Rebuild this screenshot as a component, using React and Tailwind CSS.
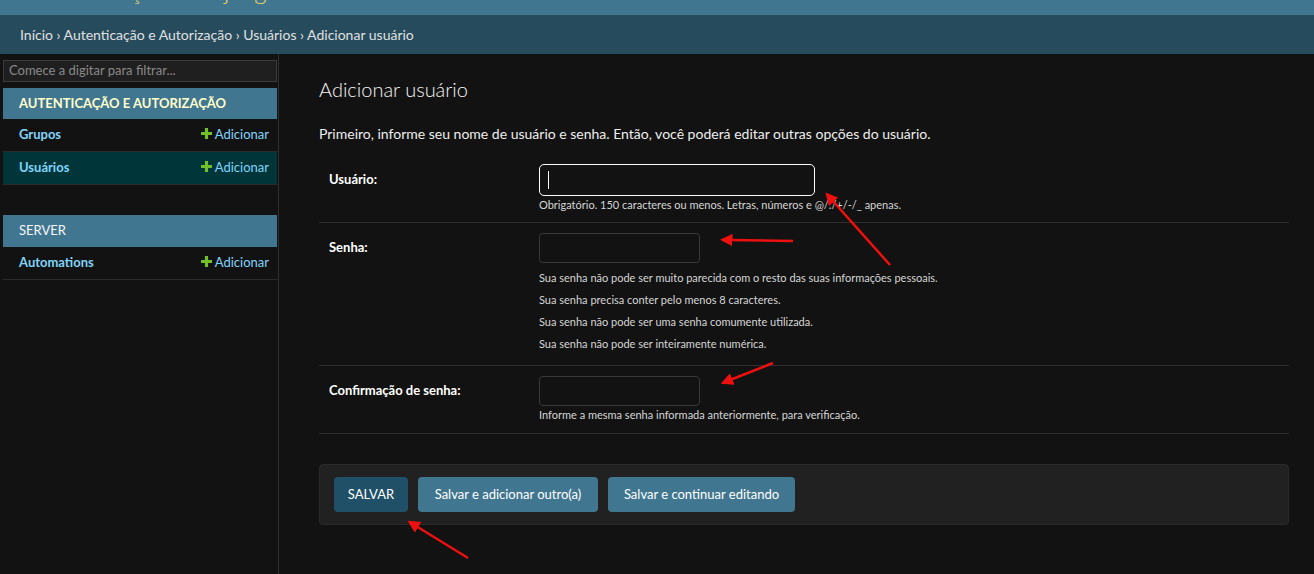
import React from 'react'

const font = { fontFamily: 'Lato, "Noto Sans", sans-serif' }

function PlusIcon() {
  return (
    <svg width="11" height="11" viewBox="0 0 14 14" className="mr-[3px] -mt-[3px]">
      <path d="M5 0h4v5h5v4H9v5H5V9H0V5h5z" fill="#70bf2b" />
    </svg>
  )
}

function ModuleRow({ name, selected }) {
  return (
    <div
      className={
        'h-[33px] flex items-center justify-between pl-4 pr-2 border-b border-[#2b2b2b] ' +
        (selected ? 'bg-[#00363a]' : '')
      }
    >
      <span className="text-[13px] font-bold text-[#81d4fa]">{name}</span>
      <span className="flex items-center text-[13px] text-[#81d4fa]">
        <PlusIcon />
        Adicionar
      </span>
    </div>
  )
}

function Sidebar() {
  return (
    <aside className="w-[279px] shrink-0 border-r border-[#2f2f2f] pl-[3px] pr-px pt-[6px]">
      <div className="h-[22px] border border-[#3a3a3a] bg-[#1f1f1f] flex items-center px-[5px] text-[13px] text-[#8a8a8a]">
        Comece a digitar para filtrar...
      </div>
      <div className="mt-[6px]">
        <div className="h-[31px] bg-[#417690] flex items-center pl-4 text-[13px] font-bold text-[#ffffcc]">
          AUTENTICAÇÃO E AUTORIZAÇÃO
        </div>
        <ModuleRow name="Grupos" />
        <ModuleRow name="Usuários" selected />
      </div>
      <div className="mt-[30px]">
        <div className="h-[32px] bg-[#417690] flex items-center pl-4 text-[13px] text-[#f7f7f7]">
          SERVER
        </div>
        <ModuleRow name="Automations" />
      </div>
    </aside>
  )
}

function Help({ children, className = '' }) {
  return <div className={'text-[11px] leading-[14px] text-[#d6d6d6] ' + className}>{children}</div>
}

function FormRow({ label, children, className = '' }) {
  return (
    <div className={'flex px-[10px] border-b border-[#2e2e2e] ' + className}>
      {label}
      <div className="flex-1">{children}</div>
    </div>
  )
}

function Label({ text, h }) {
  return (
    <div className={'w-[210px] shrink-0 flex items-center text-[13px] font-bold text-white ' + h}>{text}</div>
  )
}

function Arrows() {
  const lines = [
    [890, 265, 832, 200],
    [793, 241, 730, 240],
    [773, 363, 730, 380],
    [468, 558, 416, 526],
  ]
  return (
    <svg className="absolute inset-0 pointer-events-none" width="1314" height="574">
      <defs>
        <marker id="ah" viewBox="0 0 10 10" refX="2" refY="5" markerWidth="5" markerHeight="5" orient="auto">
          <path d="M0 0L10 5L0 10z" fill="#ee0f0f" />
        </marker>
      </defs>
      {lines.map(([x1, y1, x2, y2], i) => (
        <line key={i} x1={x1} y1={y1} x2={x2} y2={y2} stroke="#ee0f0f" strokeWidth="2.5" markerEnd="url(#ah)" />
      ))}
    </svg>
  )
}

export default function App() {
  return (
    <div className="relative min-h-screen flex flex-col bg-[#121212] text-[#eee]" style={font}>
      {/* Header (scrolled, only the bottom is visible) */}
      <header className="h-[15px] bg-[#417690] overflow-hidden px-5">
        <div className="-mt-[21px] text-2xl leading-6 font-light text-[#f5dd5d]">Administração do Django</div>
      </header>

      {/* Breadcrumbs */}
      <nav className="h-[39px] bg-[#264b5d] px-5 flex items-center text-sm text-[#e0e0e0]">
        Início › Autenticação e Autorização › Usuários › Adicionar usuário
      </nav>

      <div className="flex flex-1">
        <Sidebar />

        <main className="flex-1 pl-10 pr-[25px] pt-[23px]">
          <h1 className="text-xl leading-6 font-light text-[#f5f5f5]">Adicionar usuário</h1>
          <p className="mt-[23px] text-sm leading-5 text-[#eee]">
            Primeiro, informe seu nome de usuário e senha. Então, você poderá editar outras opções do usuário.
          </p>

          <div className="mt-[10px]">
            <FormRow label={<Label text="Usuário:" h="h-[32px]" />} className="pt-[10px] pb-[10px]">
              <div className="w-[276px] h-[32px] border border-white rounded-[5px] bg-[#121212] flex items-center pl-2">
                <span className="w-px h-[18px] bg-white" />
              </div>
              <Help className="mt-[2px]">
                Obrigatório. 150 caracteres ou menos. Letras, números e @/./+/-/_ apenas.
              </Help>
            </FormRow>

            <FormRow label={<Label text="Senha:" h="h-[30px]" />} className="pt-[10px] pb-[14px]">
              <div className="w-[161px] h-[30px] border border-[#3a3a3a] rounded bg-[#121212]" />
              <ul className="mt-[8px] flex flex-col gap-2">
                <li><Help>Sua senha não pode ser muito parecida com o resto das suas informações pessoais.</Help></li>
                <li><Help>Sua senha precisa conter pelo menos 8 caracteres.</Help></li>
                <li><Help>Sua senha não pode ser uma senha comumente utilizada.</Help></li>
                <li><Help>Sua senha não pode ser inteiramente numérica.</Help></li>
              </ul>
            </FormRow>

            <FormRow label={<Label text="Confirmação de senha:" h="h-[30px]" />} className="pt-[10px] pb-[11px]">
              <div className="w-[161px] h-[30px] border border-[#3a3a3a] rounded bg-[#121212]" />
              <Help className="mt-[2px]">Informe a mesma senha informada anteriormente, para verificação.</Help>
            </FormRow>
          </div>

          <div className="mt-[30px] h-[61px] border border-[#2a2a2a] rounded bg-[#212121] px-[14px] flex items-center gap-[10px]">
            <button className="w-[74px] h-[35px] rounded bg-[#205067] text-[13px] text-white">SALVAR</button>
            <button className="w-[180px] h-[35px] rounded bg-[#417690] text-[13px] text-white">
              Salvar e adicionar outro(a)
            </button>
            <button className="w-[187px] h-[35px] rounded bg-[#417690] text-[13px] text-white">
              Salvar e continuar editando
            </button>
          </div>
        </main>
      </div>

      <Arrows />
    </div>
  )
}
